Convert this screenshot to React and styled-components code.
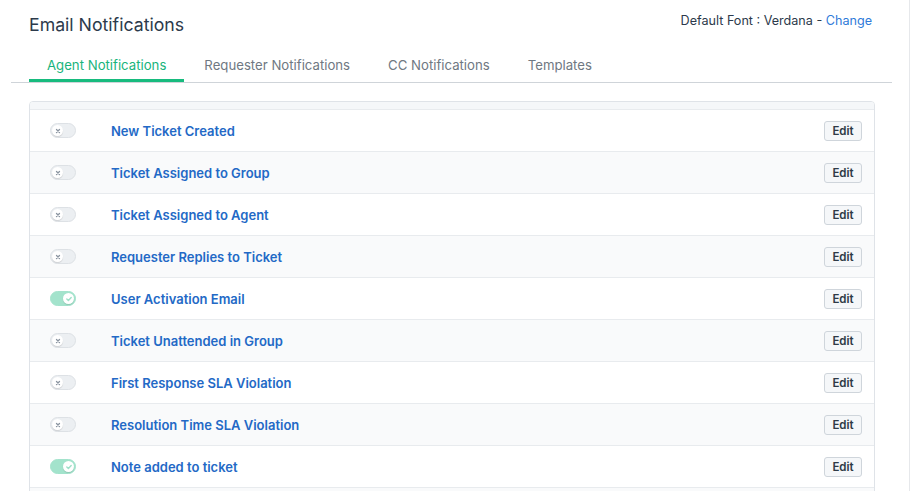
import styled, { createGlobalStyle } from 'styled-components'

const GlobalStyle = createGlobalStyle`
    html, body {
        margin: 0;
        padding: 0;
        background: #fff;
        font-family: Inter, 'Liberation Sans', Arial, sans-serif;
        overflow: hidden;
    }
`;

const notifications = [
    { name: 'New Ticket Created', on: false },
    { name: 'Ticket Assigned to Group', on: false },
    { name: 'Ticket Assigned to Agent', on: false },
    { name: 'Requester Replies to Ticket', on: false },
    { name: 'User Activation Email', on: true },
    { name: 'Ticket Unattended in Group', on: false },
    { name: 'First Response SLA Violation', on: false },
    { name: 'Resolution Time SLA Violation', on: false },
    { name: 'Note added to ticket', on: true },
]

const tabs = ['Agent Notifications', 'Requester Notifications', 'CC Notifications', 'Templates']

const Toggle = ({ on }) => (
    <Switch $on={on}>
        <Knob $on={on}>
            {on ? (
                <svg width="8" height="8" viewBox="0 0 8 8">
                    <path d="M1.8 4.1 L3.4 5.6 L6.2 2.6" fill="none" stroke="#9fe0c9" strokeWidth="1.4" strokeLinecap="round" strokeLinejoin="round" />
                </svg>
            ) : (
                <svg width="6" height="6" viewBox="0 0 6 6">
                    <path d="M1.5 1.5 L4.5 4.5 M4.5 1.5 L1.5 4.5" stroke="#8a94a0" strokeWidth="1.3" strokeLinecap="round" />
                </svg>
            )}
        </Knob>
    </Switch>
)

const App = () => {
    return (
        <Page>
            <GlobalStyle />
            <Header>
                <h1>Email Notifications</h1>
                <FontInfo>Default Font : Verdana - <a href="#">Change</a></FontInfo>
            </Header>
            <Tabs>
                {tabs.map((t, i) => (
                    <Tab key={t} $active={i === 0}>{t}</Tab>
                ))}
            </Tabs>
            <Panel>
                <PanelTop />
                {notifications.map((n, i) => (
                    <Row key={n.name} $alt={i % 2 === 1}>
                        <Toggle on={n.on} />
                        <Label>{n.name}</Label>
                        <EditButton>Edit</EditButton>
                    </Row>
                ))}
                <Row $alt />
            </Panel>
        </Page>
    )
}

const Page = styled.div`
    width: 910px;
    height: 491px;
    border-right: 1px solid #e6e8eb;
    box-sizing: border-box;
    overflow: hidden;
`;

const Header = styled.div`
    display: flex;
    justify-content: space-between;
    align-items: flex-start;
    padding: 0 37px 0 29px;
    height: 44px;
    box-sizing: border-box;
    h1 {
        margin: 13px 0 0;
        font-size: 17.7px;
        font-weight: 400;
        color: #2c3a4b;
        line-height: 24px;
    }
`;

const FontInfo = styled.div`
    font-size: 12.6px;
    color: #2c3a4b;
    line-height: 16px;
    margin-top: 13px;
    a {
        color: #2f7bd9;
        text-decoration: none;
    }
`;

const Tabs = styled.div`
    display: flex;
    margin: 0 17px 0 11px;
    padding-left: 18px;
    border-bottom: 1px solid #cfd4d9;
    height: 39px;
    box-sizing: border-box;
`;

const Tab = styled.div`
    padding: 13px 18px 7px;
    margin-right: 2px;
    font-size: 13.2px;
    line-height: 16px;
    color: ${p => p.$active ? '#19b47c' : '#6f7882'};
    border-bottom: 3px solid ${p => p.$active ? '#17bb7e' : 'transparent'};
`;

const Panel = styled.div`
    margin: 18px 34px 0 29px;
    border: 1px solid #dfe3e8;
    border-radius: 4px;
    overflow: hidden;
`;

const PanelTop = styled.div`
    height: 7px;
    background: #f5f7f9;
    border-bottom: 1px solid #e8ebee;
`;

const Row = styled.div`
    display: flex;
    align-items: center;
    height: 42px;
    box-sizing: border-box;
    padding: 0 12px 0 20px;
    background: ${p => p.$alt ? '#f9fafb' : '#fff'};
    border-bottom: 1px solid #e8ebee;
`;

const Switch = styled.div`
    width: 26px;
    height: 15px;
    border-radius: 8px;
    box-sizing: border-box;
    background: ${p => p.$on ? '#a3e3cc' : '#eceff2'};
    border: 1px solid ${p => p.$on ? '#a3e3cc' : '#dde1e5'};
    display: flex;
    align-items: center;
    justify-content: ${p => p.$on ? 'flex-end' : 'flex-start'};
    padding: 0 1px;
    flex-shrink: 0;
`;

const Knob = styled.div`
    width: 11px;
    height: 11px;
    border-radius: 50%;
    background: #fff;
    box-shadow: 0 1px 1px rgba(0,0,0,0.12);
    display: flex;
    align-items: center;
    justify-content: center;
`;

const Label = styled.div`
    margin-left: 35px;
    flex: 1;
    font-size: 13px;
    font-weight: 600;
    color: #2369c6;
`;

const EditButton = styled.button`
    width: 38px;
    height: 20px;
    padding: 0;
    font-family: inherit;
    font-size: 11.5px;
    font-weight: 600;
    color: #2f3a46;
    background: #f5f7f9;
    border: 1px solid #cfd5db;
    border-radius: 3px;
`;

export default App;
